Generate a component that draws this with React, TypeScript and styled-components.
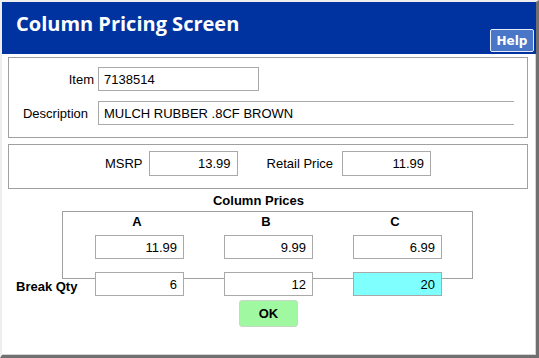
import React from "react";
import styled, { createGlobalStyle } from "styled-components";

const Global = createGlobalStyle`
  html, body { margin: 0; padding: 0; background: #ffffff; }
  * { box-sizing: border-box; }
`;

const Window = styled.div`
  width: 539px;
  height: 358px;
  background: #ffffff;
  border-style: solid;
  border-width: 2px 3px 3px 2px;
  border-color: #eeeeee #707070 #707070 #eeeeee;
  box-shadow: inset -1px -1px 0 #d4d4d4;
  font-family: "Liberation Sans", Arial, sans-serif;
  font-size: 13px;
  color: #000;
  display: flex;
  flex-direction: column;
`;

const Header = styled.div`
  height: 52px;
  background: #0033a0;
  display: flex;
  justify-content: space-between;
  padding: 0 2px 0 14px;
`;

const Title = styled.h1`
  margin: 8px 0 0 0;
  font-family: "Open Sans", "Noto Sans", sans-serif;
  font-weight: 700;
  font-size: 20px;
  line-height: 28px;
  color: #ffffff;
  align-self: flex-start;
`;

const HelpButton = styled.button`
  align-self: flex-end;
  margin-bottom: 2px;
  width: 44px;
  height: 23px;
  padding: 0;
  background: #4a76c8;
  border: 1px solid #e6ecf8;
  border-radius: 2px;
  color: #ffffff;
  font-family: "DejaVu Sans", Verdana, sans-serif;
  font-weight: 700;
  font-size: 12px;
  line-height: 20px;
`;

const Content = styled.div`
  padding: 0 0 0 6px;
  display: flex;
  flex-direction: column;
`;

const Panel = styled.div<{ $top: number; $pt: number; $pb: number }>`
  width: 520px;
  margin-top: ${(p) => p.$top}px;
  border: 1px solid #a0a0a0;
  padding: ${(p) => p.$pt}px 0 ${(p) => p.$pb}px 0;
`;

const FormGrid = styled.div`
  display: grid;
  grid-template-columns: 89px 1fr;
  row-gap: 10px;
  align-items: center;
`;

const Label = styled.label<{ $pr: number }>`
  text-align: right;
  padding-right: ${(p) => p.$pr}px;
  white-space: nowrap;
`;

const Field = styled.input<{ $w: number; $h?: number; $align?: string; $bg?: string; $openRight?: boolean }>`
  width: ${(p) => p.$w}px;
  height: ${(p) => p.$h ?? 24}px;
  margin: 0;
  padding: 0 6px 0 5px;
  border: 1px solid #a9a9a9;
  ${(p) => (p.$openRight ? "border-right: none;" : "")}
  border-radius: 0;
  background: ${(p) => p.$bg ?? "#ffffff"};
  font-family: "Liberation Sans", Arial, sans-serif;
  font-size: 13px;
  color: #000;
  text-align: ${(p) => p.$align ?? "left"};
  outline: none;
`;

const PriceRow = styled.div`
  display: flex;
  justify-content: center;
  align-items: center;
  padding-right: 0px;
`;

const PriceLabel = styled.span<{ $ml: number; $mr: number }>`
  margin-left: ${(p) => p.$ml}px;
  margin-right: ${(p) => p.$mr}px;
`;

const ColumnSection = styled.div`
  width: 520px;
  display: flex;
  flex-direction: column;
`;

const SectionTitle = styled.div`
  margin-top: 4px;
  padding-right: 19px;
  text-align: center;
  font-weight: 700;
  line-height: 15px;
`;

const ColumnBox = styled.div`
  margin: 3px 0 0 54px;
  width: 411px;
  height: 68px;
  border: 1px solid #a0a0a0;
  padding: 2px 0 0 32px;
  display: flex;
  flex-direction: column;
`;

const ColGrid = styled.div`
  display: grid;
  grid-template-columns: repeat(3, 89px);
  column-gap: 40px;
`;

const ColHead = styled.div`
  text-align: center;
  padding-right: 5px;
  font-weight: 700;
  line-height: 15px;
  margin-bottom: 6px;
`;

const BreakRow = styled.div`
  margin-top: -7px;
  display: flex;
  align-items: center;
  padding-left: 8px;
`;

const BreakLabel = styled.span`
  width: 79px;
  font-weight: 700;
  padding-top: 4px;
`;

const ButtonRow = styled.div`
  margin-top: 4px;
  display: flex;
  padding-left: 231px;
`;

const OkButton = styled.button`
  width: 59px;
  height: 27px;
  padding: 0;
  background: #a0f8a0;
  border: 1px solid #c8d8c8;
  border-radius: 3px;
  font-family: "Liberation Sans", Arial, sans-serif;
  font-weight: 700;
  font-size: 13px;
  color: #000;
`;

const cols = [
  { name: "A", price: "11.99", qty: "6" },
  { name: "B", price: "9.99", qty: "12" },
  { name: "C", price: "6.99", qty: "20" },
];

export default function App() {
  return (
    <>
      <Global />
      <Window>
        <Header>
          <Title>Column Pricing Screen</Title>
          <HelpButton>Help</HelpButton>
        </Header>
        <Content>
          <Panel $top={3} $pt={9} $pb={12}>
            <FormGrid>
              <Label $pr={4}>Item</Label>
              <Field $w={161} value="7138514" readOnly />
              <Label $pr={10}>Description</Label>
              <Field $w={416} $openRight value="MULCH RUBBER .8CF BROWN" readOnly />
            </FormGrid>
          </Panel>
          <Panel $top={6} $pt={6} $pb={12}>
            <PriceRow>
              <PriceLabel $ml={0} $mr={6}>MSRP</PriceLabel>
              <Field $w={89} $h={25} $align="right" value="13.99" readOnly />
              <PriceLabel $ml={29} $mr={9}>Retail Price</PriceLabel>
              <Field $w={89} $h={25} $align="right" value="11.99" readOnly />
            </PriceRow>
          </Panel>
          <ColumnSection>
            <SectionTitle>Column Prices</SectionTitle>
            <ColumnBox>
              <ColGrid>
                {cols.map((c) => (
                  <ColHead key={c.name}>{c.name}</ColHead>
                ))}
                {cols.map((c) => (
                  <Field key={c.name} $w={89} $align="right" value={c.price} readOnly />
                ))}
              </ColGrid>
            </ColumnBox>
            <BreakRow>
              <BreakLabel>Break Qty</BreakLabel>
              <ColGrid>
                {cols.map((c, i) => (
                  <Field
                    key={c.name}
                    $w={89}
                    $align="right"
                    $bg={i === 2 ? "#80ffff" : "#ffffff"}
                    value={c.qty}
                    readOnly
                  />
                ))}
              </ColGrid>
            </BreakRow>
            <ButtonRow>
              <OkButton>OK</OkButton>
            </ButtonRow>
          </ColumnSection>
        </Content>
      </Window>
    </>
  );
}
